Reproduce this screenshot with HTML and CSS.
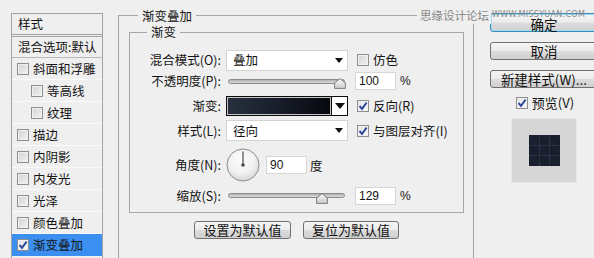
FILE: index.html
```html
<!DOCTYPE html>
<html>
<head>
<meta charset="utf-8">
<link rel="stylesheet" href="styles.css">
</head>
<body>
<div class="dialog">
  <div class="styles-list">
    <div class="li head">样式</div>
    <div class="li blend">混合选项:默认</div>
    <div class="li item"><span class="cb"></span>斜面和浮雕</div>
    <div class="li item sub"><span class="cb"></span>等高线</div>
    <div class="li item sub"><span class="cb"></span>纹理</div>
    <div class="li item"><span class="cb"></span>描边</div>
    <div class="li item"><span class="cb"></span>内阴影</div>
    <div class="li item"><span class="cb"></span>内发光</div>
    <div class="li item"><span class="cb"></span>光泽</div>
    <div class="li item"><span class="cb"></span>颜色叠加</div>
    <div class="li item sel"><span class="cb on"><svg width="10" height="10" viewBox="0 0 10 10"><path d="M1.5 5 L4 7.8 L8.6 1.6" fill="none" stroke="#2f4c9c" stroke-width="2"/></svg></span>渐变叠加</div>
  </div>

  <fieldset class="outer">
    <legend>渐变叠加</legend>
    <fieldset class="inner">
      <legend>渐变</legend>
      <div class="row r-mode">
        <span class="lbl">混合模式(O):</span>
        <div class="ctl select"><span>叠加</span><i class="tri"></i></div>
        <div class="ext chk"><span class="cb"></span>仿色</div>
      </div>
      <div class="row r-opacity">
        <span class="lbl">不透明度(P):</span>
        <div class="ctl slider"><div class="track"></div><svg class="thumb" style="left:108px" width="12" height="11" viewBox="0 0 12 11"><defs><linearGradient id="tg1" x1="0" y1="0" x2="0" y2="1"><stop offset="0" stop-color="#fbfbfb"/><stop offset="1" stop-color="#c9c9c9"/></linearGradient></defs><path d="M6 0.6 L11.4 5 L11.4 10.4 L0.6 10.4 L0.6 5 Z" fill="url(#tg1)" stroke="#7d7d7d"/></svg></div>
        <div class="ext num"><span class="input">100</span><span class="unit">%</span></div>
      </div>
      <div class="row r-grad">
        <span class="lbl">渐变:</span>
        <div class="ctl swatch"><span class="grad"></span><span class="drop"><i class="tri"></i></span></div>
        <div class="ext chk"><span class="cb on"><svg width="10" height="10" viewBox="0 0 10 10"><path d="M1.5 5 L4 7.8 L8.6 1.6" fill="none" stroke="#2f4c9c" stroke-width="2"/></svg></span>反向(R)</div>
      </div>
      <div class="row r-style">
        <span class="lbl">样式(L):</span>
        <div class="ctl select"><span>径向</span><i class="tri"></i></div>
        <div class="ext chk"><span class="cb on"><svg width="10" height="10" viewBox="0 0 10 10"><path d="M1.5 5 L4 7.8 L8.6 1.6" fill="none" stroke="#2f4c9c" stroke-width="2"/></svg></span>与图层对齐(I)</div>
      </div>
      <div class="row r-angle">
        <span class="lbl">角度(N):</span>
        <div class="ctl angle">
          <svg class="dial" width="34" height="34" viewBox="0 0 34 34"><defs><radialGradient id="dg" cx="45%" cy="35%" r="70%"><stop offset="0" stop-color="#fdfdfd"/><stop offset="0.6" stop-color="#f0f0f0"/><stop offset="1" stop-color="#d2d2d2"/></radialGradient></defs><circle cx="17" cy="17" r="16" fill="url(#dg)" stroke="#8c8c8c"/><line x1="17" y1="17" x2="17" y2="3.5" stroke="#5a5a5a" stroke-width="1.3"/><circle cx="17" cy="17" r="1.8" fill="#4a4a4a"/></svg>
          <span class="input">90</span><span class="deg">度</span>
        </div>
      </div>
      <div class="row r-scale">
        <span class="lbl">缩放(S):</span>
        <div class="ctl slider"><div class="track"></div><svg class="thumb" style="left:90px" width="12" height="11" viewBox="0 0 12 11"><defs><linearGradient id="tg2" x1="0" y1="0" x2="0" y2="1"><stop offset="0" stop-color="#fbfbfb"/><stop offset="1" stop-color="#c9c9c9"/></linearGradient></defs><path d="M6 0.6 L11.4 5 L11.4 10.4 L0.6 10.4 L0.6 5 Z" fill="url(#tg2)" stroke="#7d7d7d"/></svg></div>
        <div class="ext num"><span class="input">129</span><span class="unit">%</span></div>
      </div>
    </fieldset>
    <div class="btns">
      <button class="btn wide">设置为默认值</button>
      <button class="btn wide2">复位为默认值</button>
    </div>
  </fieldset>

  <div class="side">
    <button class="btn sbtn ok">确定</button>
    <button class="btn sbtn">取消</button>
    <button class="btn sbtn">新建样式(W)...</button>
    <div class="chk preview-chk"><span class="cb on"><svg width="10" height="10" viewBox="0 0 10 10"><path d="M1.5 5 L4 7.8 L8.6 1.6" fill="none" stroke="#2f4c9c" stroke-width="2"/></svg></span>预览(V)</div>
    <div class="preview"><div class="tile"></div></div>
  </div>

  <div class="wm1">思缘设计论坛</div>
  <div class="wm2">WWW.MISSYUAN.COM</div>
</div>
</body>
</html>
```

FILE: styles.css
```css
* { box-sizing: border-box; }
html, body { margin: 0; padding: 0; }
body {
  width: 594px;
  height: 258px;
  overflow: hidden;
  background: #efefef;
  font-family: "Noto Sans CJK SC", "Noto Sans", sans-serif;
  font-size: 12.5px;
  color: #141414;
}
.dialog {
  position: relative;
  display: flex;
  align-items: flex-start;
  width: 594px;
  height: 258px;
  overflow: hidden;
}

/* left style list */
.styles-list {
  flex: none;
  margin: 13px 0 0 11px;
  width: 92px;
  height: 262px;
  border: 1px solid #a2a2a2;
  background: #efefef;
}
.li {
  height: 22px;
  display: flex;
  align-items: center;
  padding-left: 6px;
  border-bottom: 1px solid #fafafa;
  line-height: 16px;
  white-space: nowrap;
}
.li.head { height: 23px; border-bottom: 3px double #a2a2a2; }
.li.blend { height: 21px; border-bottom: 1px solid #b9b9b9; }
.li.item { padding-left: 5px; }
.li.sub { padding-left: 19px; }
.li.sel { background: #3a8ff0; border-bottom-color: #3a8ff0; }

/* checkbox */
.cb {
  flex: none;
  width: 12px;
  height: 12px;
  margin-right: 4px;
  border: 1px solid #8e8e8e;
  background: linear-gradient(135deg, #d2d2d2, #f2f2f2);
  box-shadow: inset 0 0 0 1px #f0f0f0;
  display: inline-flex;
  align-items: center;
  justify-content: center;
}
.cb.on { background: linear-gradient(135deg, #e4e4e4, #fdfdfd); }

/* group boxes */
fieldset {
  margin: 0;
  padding: 0;
  min-width: 0;
  border: 1px solid #a6a6a6;
}
legend {
  padding: 0 4px;
  line-height: 16px;
  font-size: 12.5px;
}
.outer {
  flex: none;
  margin: 8px 0 0 15px;
  width: 356px;
  height: 270px;
  padding: 0 9px 0 10px;
}
.outer > legend { margin-left: 9px; line-height: 15px; }
.inner {
  width: 335px;
  margin-top: 1px;
  padding: 0 0 7px 0;
}
.inner > legend { margin-left: 17px; }

.row { display: flex; align-items: center; white-space: nowrap; }
.r-mode { height: 22px; margin-top: 9px; }
.r-opacity { height: 18px; margin-top: 1px; }
.r-grad { height: 20px; margin-top: 6px; }
.r-style { height: 21px; margin-top: 4px; }
.r-angle { height: 34px; margin-top: 7px; }
.r-scale { height: 19px; margin-top: 4px; }

.lbl { flex: none; width: 91px; text-align: right; line-height: 16px; }
.ctl { flex: none; width: 122px; margin-left: 5px; }
.ext { flex: none; display: flex; align-items: center; margin-left: 7px; }
.ext.chk { margin-left: 9px; }
.chk { display: flex; align-items: center; line-height: 16px; }

.select {
  height: 21px;
  background: #fff;
  border: 1px solid #d3d3d3;
  display: flex;
  align-items: center;
  justify-content: space-between;
  padding: 0 4px 0 6px;
  line-height: 16px;
}
.tri {
  width: 0;
  height: 0;
  border-left: 4px solid transparent;
  border-right: 4px solid transparent;
  border-top: 5px solid #111;
}

.slider {
  position: relative;
  height: 18px;
  display: flex;
  align-items: center;
  padding-left: 2px;
}
.track {
  width: 117px;
  height: 5px;
  border: 1px solid #8a8a8a;
  border-radius: 3px;
  background: linear-gradient(#b0b0b0, #dedede);
}
.thumb { position: absolute; top: 6px; }

.input {
  width: 41px;
  height: 18px;
  background: #fff;
  border: 1px solid #d6d6d6;
  font-family: "Liberation Sans", Arial, sans-serif;
  font-size: 12px;
  line-height: 16px;
  padding-left: 3px;
}
.unit {
  margin-left: 4px;
  font-family: "Liberation Sans", Arial, sans-serif;
  font-size: 12px;
}

.swatch {
  height: 20px;
  border: 1px solid #0c0c0c;
  display: flex;
  background: #fff;
}
.grad {
  flex: 1;
  border: 1px solid #c4c4c4;
  background: linear-gradient(90deg, #28303f 0%, #161b27 55%, #07090e 100%);
}
.drop {
  width: 16px;
  border-left: 1px solid #0c0c0c;
  display: flex;
  align-items: center;
  justify-content: center;
  background: #fff;
}
.drop .tri { border-left-width: 5px; border-right-width: 5px; border-top-width: 6px; }

.angle { display: flex; align-items: center; }
.dial { flex: none; }
.angle .input { margin-left: 6px; height: 18px; }
.deg { margin-left: 3px; }

/* buttons */
.btn {
  display: flex;
  align-items: center;
  justify-content: center;
  height: 18px;
  padding: 0;
  border: 1px solid #707070;
  border-radius: 3px;
  background: linear-gradient(#f4f4f4 0%, #ececec 48%, #dcdcdc 52%, #d0d0d0 100%);
  font-family: "Noto Sans CJK SC", "Noto Sans", sans-serif;
  font-size: 13px;
  line-height: 16px;
  color: #111;
}
.btns {
  width: 335px;
  display: flex;
  justify-content: center;
  gap: 12px;
  margin-top: 8px;
}
.btn.wide { width: 97px; }
.btn.wide2 { width: 96px; }

.side {
  flex: none;
  width: 108px;
  margin: 13px 0 0 16px;
  display: flex;
  flex-direction: column;
  align-items: center;
}
.sbtn { width: 108px; font-size: 13.5px; }
.sbtn + .sbtn { margin-top: 10px; }
.ok {
  height: 19px;
  border-color: #3c8fb9;
  box-shadow: inset 0 0 0 1px #9ed8f2;
  padding-top: 2px;
}
.preview-chk { height: 16px; margin-top: 7px; font-size: 13px; margin-left: 2px; }
.preview {
  margin-top: 7px;
  width: 66px;
  height: 65px;
  background: #d6d6d6;
  border: 1px solid #e6e6e6;
  display: flex;
  align-items: center;
  justify-content: center;
}
.tile {
  width: 31px;
  height: 31px;
  background:
    linear-gradient(90deg, transparent 10px, rgba(60,72,95,0.45) 10px, rgba(60,72,95,0.45) 11px, transparent 11px, transparent 20px, rgba(60,72,95,0.45) 20px, rgba(60,72,95,0.45) 21px, transparent 21px),
    linear-gradient(0deg, transparent 10px, rgba(60,72,95,0.45) 10px, rgba(60,72,95,0.45) 11px, transparent 11px, transparent 20px, rgba(60,72,95,0.45) 20px, rgba(60,72,95,0.45) 21px, transparent 21px),
    repeating-linear-gradient(45deg, #161c2a 0px, #161c2a 1px, #1c2333 1px, #1c2333 2px);
}

/* watermark overlay */
.wm1 {
  position: absolute;
  left: 417px;
  top: 6px;
  padding: 0 2px 0 3px;
  background: #efefef;
  color: #878787;
  font-size: 11.5px;
  line-height: 18px;
}
.wm2 {
  position: absolute;
  left: 492px;
  top: 10px;
  color: #8a8a8a;
  font-family: "DejaVu Sans", sans-serif;
  font-size: 8px;
  line-height: 10px;
  letter-spacing: 0.3px;
}
```
